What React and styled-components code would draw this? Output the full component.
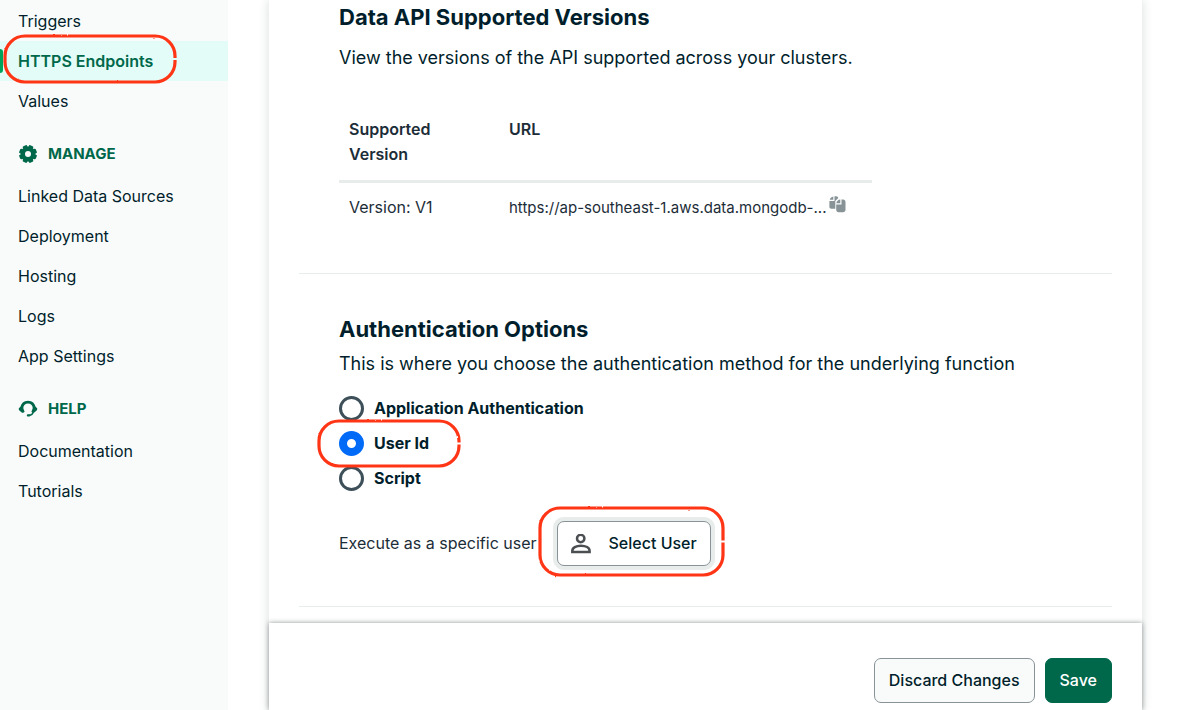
import React from "react";
import styled, { createGlobalStyle, css } from "styled-components";

const GlobalStyle = createGlobalStyle`
  *, *::before, *::after { box-sizing: border-box; }
  body {
    margin: 0;
    background: #ffffff;
    color: #001e2b;
    font-family: Inter, "Liberation Sans", sans-serif;
    font-size: 16px;
    line-height: 25px;
  }
`;

const Page = styled.div`
  display: flex;
  min-height: 100vh;
`;

/* ---------- sidebar ---------- */

const Sidebar = styled.nav`
  flex: 0 0 228px;
  padding-top: 1px;
  background: #f9fbfa;
`;

const NavItem = styled.div`
  position: relative;
  background: ${(p) => (p.$active ? "#e3fcf7" : "transparent")};
  ${(p) =>
    p.$active &&
    css`
      &::before {
        content: "";
        position: absolute;
        left: 0;
        top: 8px;
        bottom: 8px;
        width: 3px;
        border-radius: 0 4px 4px 0;
        background: #00a35c;
      }
    `}
`;

const NavLink = styled.a`
  display: block;
  padding: 0 18px;
  line-height: 40px;
  text-decoration: none;
  color: ${(p) => (p.$active ? "#00684a" : "#001e2b")};
  font-weight: ${(p) => (p.$active ? 600 : 400)};
`;

const NavHeading = styled.h2`
  display: flex;
  align-items: center;
  gap: 10px;
  height: 40px;
  margin: 12px 0 3px;
  padding: 1px 18px 0;
  color: #00684a;
  font-size: 15px;
  font-weight: 700;
`;

/* ---------- main panel ---------- */

const Main = styled.main`
  flex: 1;
  display: flex;
  flex-direction: column;
  min-width: 0;
  margin: 0 49px 0 41px;
  box-shadow: 0 0 10px 1px #dfe4e2;
`;

const Section = styled.section`
  margin: 0 30px;
  padding: ${(p) => (p.$first ? "2px" : "40px")} 40px 40px;
  border-bottom: 1px solid #e8edeb;
`;

const Title = styled.h3`
  margin: 0;
  font-size: 22px;
  line-height: 30px;
  font-weight: 700;
`;

const Lead = styled.p`
  margin: ${(p) => (p.$spaced ? "13px 0 37px" : "7px 0 20px")};
  font-size: 18px;
  line-height: 25px;
`;

const Versions = styled.table`
  width: 100%;
  max-width: 533px;
  table-layout: fixed;
  border-collapse: collapse;
  color: #1c2d38;
`;

const HeadCell = styled.th`
  width: ${(p) => p.$width || "auto"};
  padding: 10px 50px 13px 10px;
  border-bottom: 3px solid #e8edeb;
  text-align: left;
  vertical-align: top;
  font-weight: 600;
`;

const Cell = styled.td`
  padding: 12px 0 13px 10px;
  white-space: nowrap;
  vertical-align: top;
`;

const UrlLine = styled.div`
  display: flex;
  gap: 3px;
  font-size: 15px;
`;

const CopyButton = styled.button`
  display: flex;
  align-items: flex-end;
  height: 18px;
  padding: 0;
  border: 0;
  background: none;
  color: #889397;
`;

const RadioGroup = styled.div`
  display: flex;
  flex-direction: column;
  align-items: flex-start;
  gap: 10px;
`;

const RadioLabel = styled.label`
  position: relative;
  display: flex;
  align-items: center;
  gap: 10px;
  font-weight: 700;
`;

const Radio = styled.input`
  appearance: none;
  width: 25px;
  height: 25px;
  margin: 0;
  border: 3px solid #3d4f58;
  border-radius: 50%;
  background: #ffffff;
  &:checked {
    border: 8px solid #016bf8;
  }
`;

const UserRow = styled.div`
  display: flex;
  align-items: center;
  gap: 20px;
  margin-top: 30px;
  color: #1c2d38;
`;

const ButtonHolder = styled.div`
  position: relative;
`;

const Button = styled.button`
  display: flex;
  align-items: center;
  gap: 18px;
  height: 45px;
  padding: 0 ${(p) => (p.$hovered ? "13px" : "14px")};
  border: 1px solid ${(p) => (p.$primary ? "#00684a" : "#889397")};
  border-radius: 7px;
  background: ${(p) => (p.$primary ? "#00684a" : p.$hovered ? "#ffffff" : "#f9fbfa")};
  color: ${(p) => (p.$primary ? "#ffffff" : "#001e2b")};
  box-shadow: ${(p) => (p.$hovered ? "0 0 0 4px #e8edeb" : "none")};
  font: inherit;
  font-weight: 500;
`;

const Footer = styled.footer`
  display: flex;
  justify-content: flex-end;
  gap: 10px;
  margin-top: auto;
  padding: 35px 30px 7px;
  background: #ffffff;
  box-shadow: 0 0 5px #8f9494;
`;

/* ---------- red marker outlines ---------- */

const MarkerSvg = styled.svg`
  position: absolute;
  left: ${(p) => p.$left}px;
  top: ${(p) => p.$top}px;
  overflow: visible;
  pointer-events: none;
  z-index: 1;
`;

function Marker({ left, top, width, height, radius }) {
  const w = width - 4;
  const h = height - 4;
  const r = radius;
  const d = `M${w + 2} ${h / 2 + 3}V${h + 2 - r}a${r} ${r} 0 0 1-${r} ${r}H${2 + r}a${r} ${r} 0 0 1-${r}-${r}V${2 + r}a${r} ${r} 0 0 1 ${r}-${r}H${w + 2 - r}a${r} ${r} 0 0 1 ${r} ${r}V${h / 2 + 1}`;
  return (
    <MarkerSvg $left={left} $top={top} width={width} height={height} aria-hidden="true">
      <defs>
        <filter id={`rough-${width}`} x="-5%" y="-10%" width="110%" height="120%" colorInterpolationFilters="sRGB">
          <feTurbulence type="fractalNoise" baseFrequency="0.3" numOctaves="1" seed="4" result="n" />
          <feDisplacementMap in="SourceGraphic" in2="n" scale="2" xChannelSelector="R" yChannelSelector="G" />
        </filter>
      </defs>
      <path d={d} fill="none" stroke="#ff3515" strokeWidth="3.2" filter={`url(#rough-${width})`} />
    </MarkerSvg>
  );
}

/* ---------- icons ---------- */

const GearIcon = () => (
  <svg width="20" height="20" viewBox="0 0 20 20" aria-hidden="true">
    <g fill="currentColor">
      {[0, 45, 90, 135].map((a) => (
        <rect key={a} x="7.6" y="1" width="4.800" height="18" rx="1.2" transform={`rotate(${a + 22.5} 10 10)`} />
      ))}
      <circle cx="10" cy="10" r="7.400" />
    </g>
    <circle cx="10" cy="10" r="3" fill="#f9fbfa" />
  </svg>
);

const SupportIcon = () => (
  <svg width="20" height="20" viewBox="0 0 20 20" fill="none" stroke="currentColor" aria-hidden="true">
    <path d="M3.800 9C4.300 5.200 6.700 3.200 10 3.200s5.700 2 6.200 5.800" strokeWidth="2.800" />
    <path d="M15.400 12.500c-.5 2.600-2 3.700-4.600 4" strokeWidth="1.400" />
    <rect x="8.800" y="15.300" width="3.400" height="2.200" rx="1" fill="currentColor" stroke="none" />
    <path d="M2.600 7.400h2l2 5.400c-.7 1.200-2.300 1.300-3.200.5L1.400 11.400c-.9-.8-.9-1.900 0-2.600zM17.400 7.400h-2l-2 5.400c.7 1.200 2.300 1.300 3.200.5l2-1.900c.9-.8.9-1.900 0-2.600z" fill="currentColor" stroke="none" />
  </svg>
);

const CopyIcon = () => (
  <svg width="17" height="17" viewBox="0 0 17 17" fill="currentColor" aria-hidden="true">
    <path d="M4.300.5v3.200H.8C1.200 2 2.500.8 4.300.5zM5.500.3h1.600c1.200 0 2 .7 2.200 1.700L6.300 4.900v7.800H2.300C1.200 12.700.4 12 .4 11V4.900h5.100z" />
    <path d="M11.300 3.600v3.600H7.300c.2-2 1.900-3.400 4-3.600zM12.500 3.500h1.600c1.400 0 2.400 1 2.400 2.300v8c0 1.500-1 2.500-2.400 2.500H9.600c-1.400 0-2.400-1-2.400-2.500V8.400h5.300z" />
  </svg>
);

const PersonIcon = () => (
  <svg width="20" height="20" viewBox="0 0 20 20" fill="none" stroke="#4b4f52" strokeWidth="2.500" aria-hidden="true">
    <circle cx="9.700" cy="4.500" r="3.700" />
    <path d="M1.300 18v-1c0-3.300 3.700-5.200 8.600-5.200s8.700 1.900 8.700 5.200v1z" />
  </svg>
);

const topLinks = ["Triggers", "HTTPS Endpoints", "Values"];
const manageLinks = ["Linked Data Sources", "Deployment", "Hosting", "Logs", "App Settings"];
const helpLinks = ["Documentation", "Tutorials"];
const authOptions = ["Application Authentication", "User Id", "Script"];

function NavList({ items, active }) {
  return items.map((label) => (
    <NavItem key={label} $active={label === active}>
      <NavLink href="#" $active={label === active}>
        {label}
      </NavLink>
      {label === active && <Marker left={3} top={-7} width={174} height={50} radius={20} />}
    </NavItem>
  ));
}

export default function App() {
  return (
    <Page>
      <GlobalStyle />
      <Sidebar>
        <NavList items={topLinks} active="HTTPS Endpoints" />
        <NavHeading>
          <GearIcon />
          MANAGE
        </NavHeading>
        <NavList items={manageLinks} />
        <NavHeading>
          <SupportIcon />
          HELP
        </NavHeading>
        <NavList items={helpLinks} />
      </Sidebar>

      <Main>
        <Section $first>
          <Title>Data API Supported Versions</Title>
          <Lead $spaced>View the versions of the API supported across your clusters.</Lead>
          <Versions>
            <thead>
              <tr>
                <HeadCell $width="160px">Supported Version</HeadCell>
                <HeadCell>URL</HeadCell>
              </tr>
            </thead>
            <tbody>
              <tr>
                <Cell>Version: V1</Cell>
                <Cell>
                  <UrlLine>
                    https://ap-southeast-1.aws.data.mongodb-...
                    <CopyButton type="button" aria-label="Copy URL">
                      <CopyIcon />
                    </CopyButton>
                  </UrlLine>
                </Cell>
              </tr>
            </tbody>
          </Versions>
        </Section>

        <Section>
          <Title>Authentication Options</Title>
          <Lead>This is where you choose the authentication method for the underlying function</Lead>
          <RadioGroup role="radiogroup" aria-label="Authentication Options">
            {authOptions.map((label) => (
              <RadioLabel key={label}>
                <Radio type="radio" name="auth" defaultChecked={label === "User Id"} />
                {label}
                {label === "User Id" && <Marker left={-22} top={-12} width={144} height={49} radius={20} />}
              </RadioLabel>
            ))}
          </RadioGroup>
          <UserRow>
            Execute as a specific user
            <ButtonHolder>
              <Button type="button" $hovered>
                <PersonIcon />
                Select User
              </Button>
              <Marker left={-19} top={-15} width={187} height={71} radius={20} />
            </ButtonHolder>
          </UserRow>
        </Section>

        <Footer>
          <Button type="button">Discard Changes</Button>
          <Button type="button" $primary>
            Save
          </Button>
        </Footer>
      </Main>
    </Page>
  );
}
